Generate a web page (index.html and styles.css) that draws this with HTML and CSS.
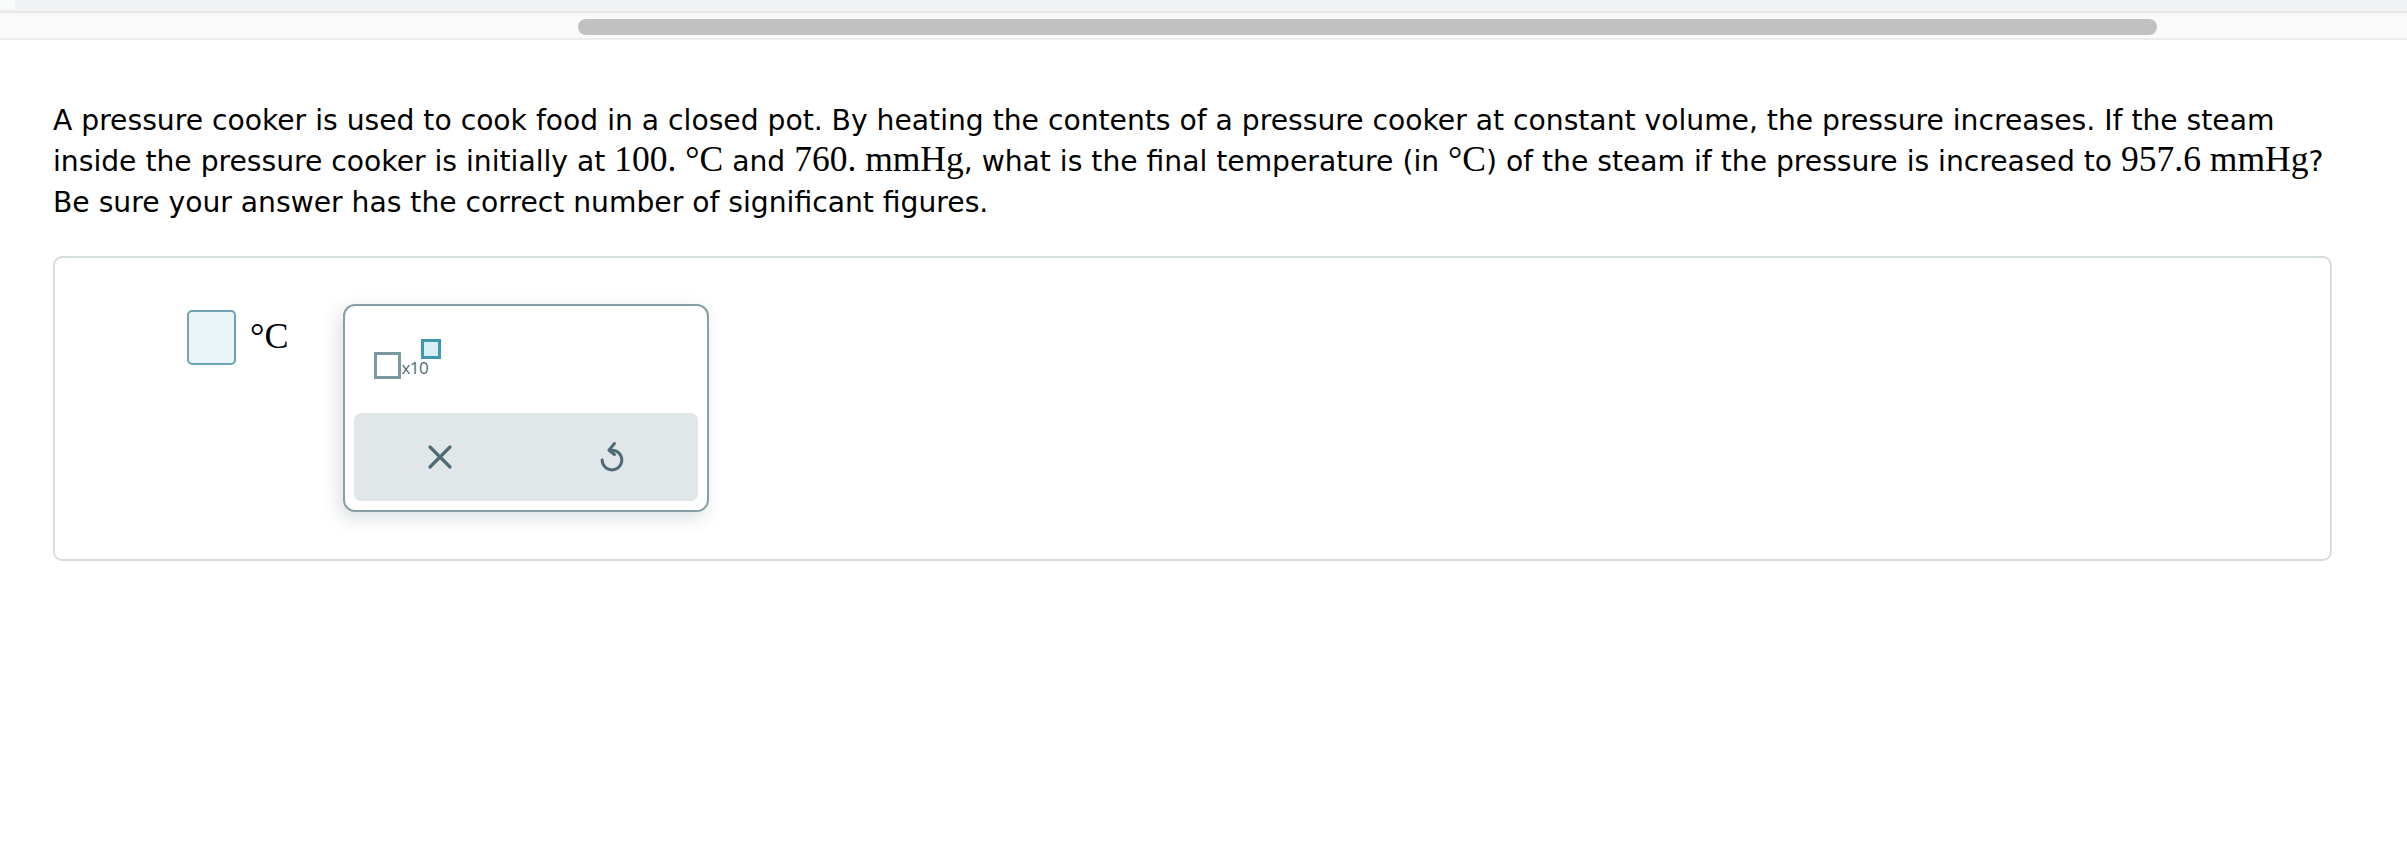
FILE: index.html
```html
<!DOCTYPE html>
<html>
<head>
<meta charset="utf-8">
<link rel="stylesheet" href="styles.css">
</head>
<body>
<div class="topbar"><div class="topbar-corner"></div></div>
<div class="scrolltrack"><div class="thumb"></div></div>
<main class="content">
  <p class="question">A pressure cooker is used to cook food in a closed pot. By heating the contents of a pressure cooker at constant volume, the pressure increases. If the steam inside the pressure cooker is initially at <span class="m">100. °C</span> and <span class="m">760. mmHg</span>, what is the final temperature (in <span class="m">°C</span>) of the steam if the pressure is increased to <span class="m">957.6 mmHg</span>? Be sure your answer has the correct number of significant figures.</p>
  <section class="card">
    <div class="answer-row">
      <div class="answer-box"></div>
      <div class="unit">°C</div>
      <div class="keypad">
        <div class="keypad-top">
          <div class="sci">
            <span class="sci-box"></span><span class="sci-x">x10</span><span class="sci-exp"></span>
          </div>
        </div>
        <div class="keypad-actions">
          <button class="act" aria-label="clear">
            <svg width="28" height="28" viewBox="0 0 28 28"><path d="M4 4 L24 24 M24 4 L4 24" stroke="#4e6b75" stroke-width="3.2" fill="none" stroke-linecap="round"/></svg>
          </button>
          <button class="act" aria-label="undo">
            <svg width="32" height="38" viewBox="0 0 26 30"><path d="M13 9.5 A8 8 0 1 1 5 17.5" stroke="#4e6b75" stroke-width="2.4" fill="none" stroke-linecap="round"/><path d="M15 4 L10.5 9.5 L15 13" stroke="#4e6b75" stroke-width="2.4" fill="none" stroke-linecap="round" stroke-linejoin="round"/></svg>
          </button>
        </div>
      </div>
    </div>
  </section>
</main>
</body>
</html>
```
FILE: styles.css
```css
html, body {
  margin: 0;
  padding: 0;
  background: #ffffff;
}
body {
  width: 2407px;
  height: 855px;
  overflow: hidden;
  font-family: "DejaVu Sans", Verdana, sans-serif;
  color: #000;
}
.topbar {
  height: 11px;
  background: #f1f2f4;
  border-bottom: 2px solid #e6e7e9;
}
.topbar-corner {
  width: 15px;
  height: 9px;
  background: #fafbfb;
}
.scrolltrack {
  height: 27px;
  box-sizing: border-box;
  background: #fafafa;
  border-bottom: 2px solid #ececec;
  padding-left: 578px;
  padding-top: 6px;
}
.thumb {
  width: 1579px;
  height: 16px;
  border-radius: 8px;
  background: #c1c1c1;
}
.content {
  padding: 60px 75px 0 53px;
}
.question {
  margin: 0 -30px 0 0;
  font-size: 28.2px;
  line-height: 41px;
}
.m {
  font-family: "Liberation Serif", "Times New Roman", serif;
  font-size: 35.5px;
  line-height: 1;
  white-space: nowrap;
}
.card {
  margin-top: 33px;
  border: 2px solid #d6dde0;
  border-radius: 9px;
  box-sizing: border-box;
  height: 305px;
  padding: 46px 0 0 132px;
}
.answer-row {
  display: flex;
  align-items: flex-start;
}
.answer-box {
  width: 49px;
  height: 55px;
  margin-top: 6px;
  box-sizing: border-box;
  border: 2px solid #6fa2b2;
  border-radius: 5px;
  background: #e8f4f6;
}
.unit {
  font-family: "Liberation Serif", "Times New Roman", serif;
  font-size: 36px;
  line-height: 40px;
  margin-left: 14px;
  margin-top: 12px;
}
.keypad {
  margin-left: 55px;
  width: 366px;
  height: 208px;
  box-sizing: border-box;
  border: 2px solid #8a9fa6;
  border-radius: 12px;
  background: #fff;
  box-shadow: -4px 6px 18px rgba(60, 80, 90, 0.18);
  padding: 9px;
  display: flex;
  flex-direction: column;
}
.keypad-top {
  height: 98px;
  padding: 24px 0 0 20px;
  box-sizing: border-box;
}
.sci {
  display: flex;
  align-items: flex-start;
}
.sci-box {
  width: 27px;
  height: 27px;
  box-sizing: border-box;
  border: 3px solid #7b979f;
  margin-top: 13px;
}
.sci-x {
  font-family: "Open Sans", sans-serif;
  font-size: 17px;
  color: #4e6b75;
  margin-top: 19px;
  line-height: 20px;
  letter-spacing: -0.5px;
}
.sci-exp {
  width: 20px;
  height: 20px;
  box-sizing: border-box;
  border: 3px solid #3f98b1;
  background: #d9eef4;
  margin-left: -7px;
}
.keypad-actions {
  flex: 1;
  display: flex;
  background: #e1e6e9;
  border-radius: 7px;
}
.act {
  flex: 1;
  border: 0;
  background: transparent;
  display: flex;
  align-items: center;
  justify-content: center;
  padding: 0;
}
```
